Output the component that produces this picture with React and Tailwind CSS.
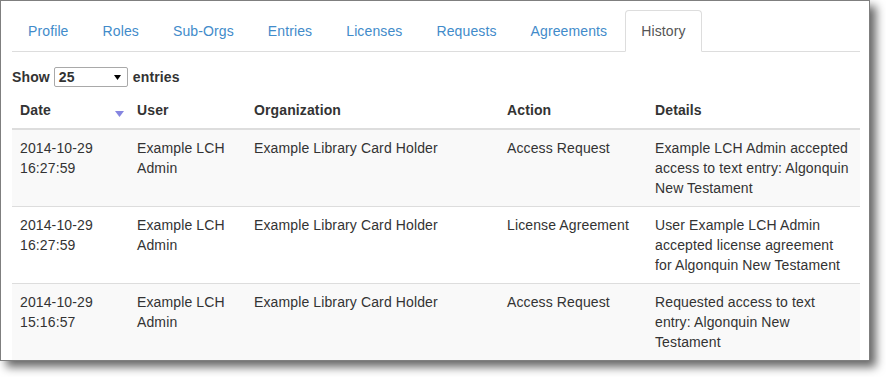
import React from "react";

const tabs = ["Profile", "Roles", "Sub-Orgs", "Entries", "Licenses", "Requests", "Agreements", "History"];

const rows = [
  {
    date: ["2014-10-29", "16:27:59"],
    user: "Example LCH Admin",
    org: "Example Library Card Holder",
    action: "Access Request",
    details: "Example LCH Admin accepted access to text entry: Algonquin New Testament",
  },
  {
    date: ["2014-10-29", "16:27:59"],
    user: "Example LCH Admin",
    org: "Example Library Card Holder",
    action: "License Agreement",
    details: "User Example LCH Admin accepted license agreement for Algonquin New Testament",
  },
  {
    date: ["2014-10-29", "15:16:57"],
    user: "Example LCH Admin",
    org: "Example Library Card Holder",
    action: "Access Request",
    details: "Requested access to text entry: Algonquin New Testament",
  },
];

export default function App() {
  return (
    <div className="w-[886px] h-[377px] bg-white font-['Liberation_Sans',Arial,sans-serif] text-[14px] leading-[20px] tracking-[0.12px] text-[#333]">
      <div className="w-[870px] h-[361px] border border-[#7f7f7f] bg-white shadow-[6px_6px_9px_rgba(0,0,0,0.6)] overflow-hidden pl-[11px] pr-[9px]">
        <ul className="flex border-b border-[#ddd] mt-[9px]">
          {tabs.map((t) => {
            const active = t === "History";
            return (
              <li key={t} className="mr-[2px] -mb-px">
                <a
                  className={
                    active
                      ? "block px-[15px] py-[10px] leading-[20px] rounded-t-[4px] border border-[#ddd] border-b-transparent bg-white text-[#555]"
                      : "block px-[15px] py-[10px] leading-[20px] rounded-t-[4px] border border-transparent text-[#428bca]"
                  }
                >
                  {t}
                </a>
              </li>
            );
          })}
        </ul>

        <div className="flex items-center h-[20px] mt-[15px] font-bold">
          <span>Show</span>
          <div className="ml-[4px] w-[74px] h-[20px] border border-[#a9a9a9] rounded-[2px] bg-white flex items-center justify-between pl-[4px] pr-[6px]">
            <span>25</span>
            <svg width="7" height="5" viewBox="0 0 7 5">
              <polygon points="0,0 7,0 3.5,5" fill="#000" />
            </svg>
          </div>
          <span className="ml-[5px]">entries</span>
        </div>

        <table className="table-fixed w-full border-collapse mt-[5px]">
          <colgroup>
            <col className="w-[117px]" />
            <col className="w-[117px]" />
            <col className="w-[253px]" />
            <col className="w-[148px]" />
            <col className="w-[213px]" />
          </colgroup>
          <thead>
            <tr>
              <th className="relative text-left font-bold p-2 border-b-2 border-[#ddd] align-bottom">
                Date
                <svg className="absolute right-[5px] top-[19px]" width="9" height="6" viewBox="0 0 9 6">
                  <polygon points="0,0 9,0 4.5,6" fill="#8585e0" />
                </svg>
              </th>
              <th className="text-left font-bold p-2 border-b-2 border-[#ddd] align-bottom">User</th>
              <th className="text-left font-bold p-2 border-b-2 border-[#ddd] align-bottom">Organization</th>
              <th className="text-left font-bold p-2 border-b-2 border-[#ddd] align-bottom">Action</th>
              <th className="text-left font-bold p-2 border-b-2 border-[#ddd] align-bottom">Details</th>
            </tr>
          </thead>
          <tbody>
            {rows.map((r, i) => (
              <tr key={i} className={i % 2 === 0 ? "bg-[#f9f9f9]" : "bg-white"}>
                <td className="p-2 align-top border-t border-[#ddd] h-[77px]">
                  {r.date[0]}
                  <br />
                  {r.date[1]}
                </td>
                <td className="p-2 align-top border-t border-[#ddd]">{r.user}</td>
                <td className="p-2 align-top border-t border-[#ddd]">{r.org}</td>
                <td className="p-2 align-top border-t border-[#ddd]">{r.action}</td>
                <td className="p-2 align-top border-t border-[#ddd]">{r.details}</td>
              </tr>
            ))}
          </tbody>
        </table>
      </div>
    </div>
  );
}
